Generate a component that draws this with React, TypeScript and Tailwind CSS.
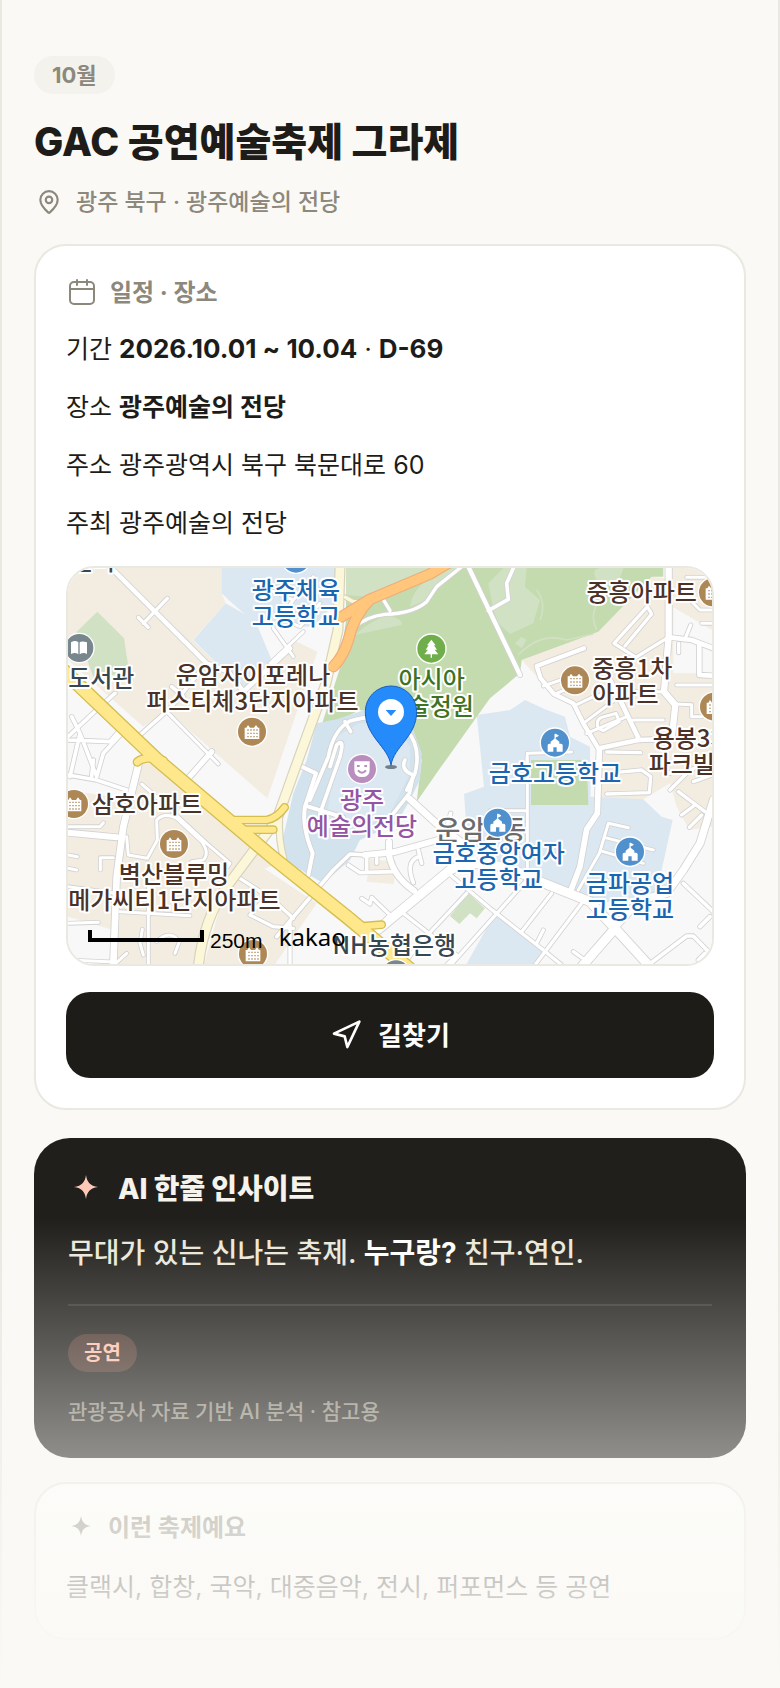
import React from 'react';
import { MapPin, Navigation } from 'lucide-react';

type RoadLine = { d: string; w: number };

// Side streets, drawn as a grey casing below a white fill
const streets: RoadLine[] = [
    { d: 'M150 20 L440 310 L505 335 L550 395 L690 265', w: 14 },
    { d: 'M322 115 L250 190 M235 172 L265 202', w: 10 },
    { d: 'M24 530 L120 440 L165 400 M24 540 L150 545 L180 510 M35 470 L60 520 L30 650 M60 520 L110 650 M190 515 L130 580 L110 650', w: 11 },
    { d: 'M240 525 L330 445 L440 310 M335 380 L370 410', w: 11 },
    { d: 'M320 455 L475 612', w: 9 },
    { d: 'M455 575 L385 655', w: 16 },
    { d: 'M235 615 L190 800 L170 950 L160 1215', w: 20 },
    { d: 'M24 645 L110 660 L200 690 M100 600 L95 650', w: 11 },
    { d: 'M24 818 L170 832', w: 18 },
    { d: 'M24 800 L120 800 L130 788 M24 925 L50 930 M24 885 L52 890 M160 893 L121 893 L121 930 M24 980 L165 1000 M24 1090 L115 1087 M24 1200 L165 1206 M165 1212 L200 1180', w: 9 },
    { d: 'M245 672 L300 720 L440 850 L510 910 L480 950 M200 830 L205 885 L262 895 L292 840 L290 780 Q315 755 350 775 L425 845 Q450 880 430 900 L395 905', w: 9 },
    { d: 'M265 980 L265 1215 M180 1055 L390 1067 M247 1108 L240 1150 L250 1185 M290 1145 Q330 1105 358 1145 L345 1180', w: 9 },
    { d: 'M540 955 L640 1020 L700 1075 M620 1010 L570 1065 L640 1100 L700 1105', w: 10 },
    { d: 'M640 95 L700 120 L760 50 M700 120 L660 175 L720 200 L780 130 M640 205 L700 290 M730 215 L630 310', w: 9 },
    { d: 'M885 200 Q920 170 975 163 Q1060 160 1100 125 L1130 80 L1205 20 M972 122 L990 152', w: 10 },
    { d: 'M1225 20 L1380 345', w: 13 },
    { d: 'M1285 152 L1345 118 L1340 70 L1362 20', w: 11 },
    { d: 'M1040 690 L1065 640 Q1085 560 1040 510 Q980 450 870 483 Q820 510 805 590 L750 720 M855 485 L872 515 M810 620 L830 555 Q855 530 840 590 L780 760', w: 11 },
    { d: 'M1035 600 Q1020 630 1060 645 L1048 700 L1000 760', w: 11 },
    { d: 'M725 620 L768 640 L735 740 Q725 800 758 880 L745 945 M745 740 L850 772', w: 12 },
    { d: 'M1050 718 L1140 800 L1210 850', w: 20 },
    { d: 'M1160 805 L1172 760 M1085 910 L1075 870 M1060 968 Q1035 905 1075 890', w: 11 },
    { d: 'M915 885 L1000 877 L1140 838 M987 845 L987 885 Q1000 950 1062 992', w: 18 },
    { d: 'M650 1130 L820 930 L870 882 L920 885 M865 915 L900 938 L1000 935 M920 890 L920 935 M950 895 L950 910', w: 11 },
    { d: 'M690 1085 L690 1212 M905 1015 L930 1032 L935 1012 L990 1065 L955 1100', w: 10 },
    { d: 'M1030 1060 L1190 1185 L1160 1215 M1220 1000 L1070 1160 L1030 1215', w: 10 },
    { d: 'M1160 935 L1290 1045 L1460 1178 L1505 1215 M1400 960 L1150 1240 M1475 1000 L1385 1115 M1565 1030 L1425 1215 M1450 1110 L1430 1150 M1540 1175 L1575 1200', w: 10 },
    { d: 'M1870 970 L1960 1055 M1765 1215 L1880 1128 L1900 1128 L1960 1190 M1920 1100 L1950 1070 M1915 1200 L1935 1180', w: 11 },
    { d: 'M955 1108 L1170 930 Q1270 880 1440 965 L1590 1025 L1665 1105 L1565 1220 M1665 1105 L1770 1220', w: 27 },
    { d: 'M1665 1100 L1740 1020 L1820 1000 L1870 930 L1920 850 L1960 720', w: 22 },
    { d: 'M1618 570 L1612 760 L1580 808 L1560 920 L1535 985', w: 17 },
    { d: 'M1402 590 L1402 950 M1290 752 L1402 752 M1400 610 L1402 580 L1535 576', w: 9 },
    { d: 'M1705 803 L1645 790 L1618 880 L1555 990 M1632 832 L1780 870 M1620 872 L1750 910', w: 9 },
    { d: 'M1572 265 L1430 318 L1442 355 L1482 402 L1540 430 L1570 490 L1615 565', w: 13 },
    { d: 'M1450 378 L1560 340 M1490 400 L1560 370 M1542 438 L1600 410 L1680 392 M1570 490 L1690 400', w: 9 },
    { d: 'M1618 565 L1735 540 L1880 535 M1738 540 L1690 440 L1645 350', w: 14 },
    { d: 'M1826 20 L1826 230 L1812 395 L1846 435 L1835 535', w: 19 },
    { d: 'M1830 232 L1895 240 L1960 265 M1918 252 L1918 345 L1960 347', w: 14 },
    { d: 'M1892 195 L1878 230 M1856 250 L1856 278 M1820 235 L1760 272 L1728 292 L1662 250 L1762 140 L1775 162 L1695 258', w: 10 },
    { d: 'M1880 52 L1960 52 M1870 100 L1920 150 L1960 150 M1925 190 L1960 190 M1850 375 L1960 375 M1845 432 L1895 434 L1895 470 L1925 470', w: 9 },
    { d: 'M1720 480 L1810 480 M1715 395 L1810 395 M1615 505 Q1605 480 1625 472 L1668 460 L1678 485 L1630 512 Z M1580 520 L1700 470', w: 9 },
    { d: 'M1640 576 L1742 578 M1640 640 L1745 630 M1640 702 L1768 698 L1772 650 L1745 630', w: 10 },
    { d: 'M1830 690 L1890 630 L1960 600 M1800 620 L1830 640 M1855 695 L1935 755 M1905 735 L1865 765 M1925 765 L1888 802 M1900 665 L1956 645', w: 10 },
];

const paleRoads: RoadLine[] = [
    { d: 'M840 20 L834 210 L798 370 L700 640 L650 780 L500 980 Q430 1080 415 1220', w: 26 },
    { d: 'M658 770 Q655 840 672 900', w: 16 },
    { d: 'M856 112 L880 125 L925 125', w: 10 },
];

const highways: RoadLine[] = [
    { d: 'M232 606 Q255 585 310 602', w: 20 },
    { d: 'M520 780 L620 780 Q650 775 674 742', w: 18 },
    { d: 'M550 809 L640 809', w: 18 },
    { d: 'M965 1094 L890 1100', w: 18 },
    { d: 'M0 322 L290 598 L640 894 L860 1070 L1055 1232', w: 36 },
];

const trunkRoads: RoadLine[] = [
    { d: 'M1180 0 L1110 42 L930 118 L845 170', w: 28 },
    { d: 'M930 118 Q880 170 865 240 Q850 290 820 320', w: 28 },
];

const Roads: React.FC<{ lines: RoadLine[]; fill: string; casing: string; edge: number }> = ({ lines, fill, casing, edge }) => (
    <g fill="none" strokeLinecap="round" strokeLinejoin="round">
        {lines.map(line => <path key={`c${line.d}`} d={line.d} stroke={casing} strokeWidth={line.w + edge} />)}
        {lines.map(line => <path key={`f${line.d}`} d={line.d} stroke={fill} strokeWidth={line.w} />)}
    </g>
);

type PoiKind = 'apartment' | 'school' | 'tree' | 'book' | 'mask' | 'bank';

const poiColors: Record<PoiKind, string> = {
    apartment: '#ad8755',
    school: '#5091cd',
    tree: '#6fae4b',
    book: '#78868e',
    mask: '#b98dbd',
    bank: '#78868e',
};

const pois: { kind: PoiKind; x: number; y: number }[] = [
    { kind: 'book', x: 58, y: 264 },
    { kind: 'apartment', x: 576, y: 515 },
    { kind: 'apartment', x: 1959, y: 97 },
    { kind: 'apartment', x: 1545, y: 361 },
    { kind: 'apartment', x: 1962, y: 440 },
    { kind: 'apartment', x: 42, y: 732 },
    { kind: 'apartment', x: 342, y: 852 },
    { kind: 'apartment', x: 579, y: 1182 },
    { kind: 'school', x: 708, y: -4 },
    { kind: 'school', x: 1485, y: 548 },
    { kind: 'school', x: 1313, y: 788 },
    { kind: 'school', x: 1710, y: 875 },
    { kind: 'tree', x: 1114, y: 266 },
    { kind: 'mask', x: 906, y: 627 },
    { kind: 'bank', x: 1008, y: 1243 },
];

const PoiGlyph: React.FC<{ kind: PoiKind }> = ({ kind }) => {
    switch (kind) {
        case 'apartment':
            return (
                <>
                    <path d="M-22 22 V-12 L-17 -12 L-12 -20 L-6 -12 L-3 -12 L3 -12 L6 -12 L12 -20 L18 -12 L22 -12 V22 Z" fill="#fff" />
                    <path d="M-14 -5 H18 M-14 5 H18 M-14 15 H18" stroke="#ad8755" strokeWidth="4" strokeDasharray="4 5" />
                </>
            );
        case 'school':
            return (
                <>
                    <path d="M-22 27 V8 Q-22 3 -17 3 H-13 V-3 L0 -13 L13 -3 V3 H18 Q23 3 23 8 V27 H5 V14 H-5 V27 Z" fill="#fff" />
                    <path d="M0 -10 V-26 L10 -21 L2 -17" stroke="#fff" strokeWidth="3" fill="#fff" />
                </>
            );
        case 'tree':
            return <path d="M0 -27 L13 -10 H8 L17 3 H10 L21 17 H2 V27 H-2 V17 H-21 L-10 3 H-17 L-8 -10 H-13 Z" fill="#fff" />;
        case 'book':
            return <path d="M-25 -17 Q-12 -25 -3 -17 V19 Q-12 12 -25 18 Z M1 -17 Q8 -22 23 -17 V18 Q12 12 1 19 Z" fill="#fff" />;
        case 'mask':
            return (
                <>
                    <path d="M-23 -23 H23 V2 Q23 24 0 24 Q-23 24 -23 2 Z" fill="#fff" />
                    <path d="M-15 -9 H-7 M7 -9 H15 M-12 4 Q0 18 12 4" stroke="#b98dbd" strokeWidth="6" fill="none" />
                </>
            );
        default:
            return null;
    }
};

type MapLabel = { text: string; x: number; y: number; color: string; anchor?: 'start' | 'middle'; size?: number };

const BROWN = '#4b3227';
const BLUE = '#1b66b1';
const SLATE = '#37474f';

const labels: MapLabel[] = [
    { text: '센터', x: 98, y: 31, color: SLATE },
    { text: '광주체육', x: 708, y: 116, color: BLUE },
    { text: '고등학교', x: 708, y: 194, color: BLUE },
    { text: '중흥아파트', x: 1745, y: 122, color: BROWN },
    { text: '도서관', x: 124, y: 382, color: SLATE },
    { text: '운암자이포레나', x: 579, y: 371, color: BROWN },
    { text: '퍼스티체3단지아파트', x: 577, y: 451, color: BROWN },
    { text: '아시아', x: 1115, y: 385, color: '#3e7324' },
    { text: '예술정원', x: 1109, y: 465, color: '#3e7324' },
    { text: '중흥1차', x: 1597, y: 350, color: BROWN, anchor: 'start' },
    { text: '아파트', x: 1597, y: 428, color: BROWN, anchor: 'start' },
    { text: '용봉3차', x: 1778, y: 561, color: BROWN, anchor: 'start' },
    { text: '파크빌', x: 1766, y: 640, color: BROWN, anchor: 'start' },
    { text: '금호고등학교', x: 1485, y: 665, color: BLUE },
    { text: '삼호아파트', x: 95, y: 760, color: BROWN, anchor: 'start' },
    { text: '벽산블루밍', x: 342, y: 968, color: BROWN },
    { text: '메가씨티1단지아파트', x: 343, y: 1048, color: BROWN },
    { text: '광주', x: 906, y: 747, color: '#9456a4' },
    { text: '예술의전당', x: 906, y: 825, color: '#9456a4' },
    { text: '금호중앙여자', x: 1316, y: 906, color: BLUE },
    { text: '고등학교', x: 1316, y: 984, color: BLUE },
    { text: '금파공업', x: 1710, y: 995, color: BLUE },
    { text: '고등학교', x: 1710, y: 1073, color: BLUE },
    { text: 'NH농협은행', x: 1003, y: 1181, color: SLATE },
];

const Label: React.FC<{ label: MapLabel }> = ({ label }) => (
    <text
        x={label.x}
        y={label.y}
        fill={label.color}
        fontSize={label.size ?? 72}
        textAnchor={label.anchor ?? 'middle'}
        stroke="#fff"
        strokeWidth="12"
        strokeLinejoin="round"
        paintOrder="stroke"
    >
        {label.text}
    </text>
);

const VenueMap: React.FC = () => (
    <svg
        viewBox="24 24 1932 1188"
        preserveAspectRatio="xMidYMid slice"
        role="img"
        aria-label="광주예술의 전당 지도"
        className="block h-full w-full font-['Noto_Sans_CJK_KR',sans-serif] font-medium"
    >
        <rect x="0" y="0" width="2000" height="1260" fill="#f8f8f8" />

        {/* housing blocks */}
        <g fill="#f3ece1">
            <path d="M24 24 H485 V100 L497 130 L398 240 L550 390 L700 240 L772 275 L622 715 L325 455 L250 500 L165 425 L24 300 Z" />
            <path d="M240 610 H300 L660 905 L500 980 L400 1220 H165 L190 800 Z" />
            <path d="M24 690 L185 715 L160 1110 L24 1070 Z" />
            <path d="M560 890 L770 1030 L640 1220 H430 L480 1040 Z" />
            <path d="M930 897 L1008 905 L1002 972 L920 965 Z" />
            <path d="M1385 300 L1615 215 L1775 50 L1815 55 V24 H1956 V800 L1888 810 L1850 740 L1750 718 L1610 722 L1615 570 L1540 440 L1440 360 Z" />
        </g>
        <g fill="#f8f8f8">
            <path d="M1840 142 L1956 210 V340 H1840 Z" />
            <path d="M1750 718 L1830 670 L1850 740 L1870 800 L1838 780 Z" />
        </g>

        {/* school grounds */}
        <g fill="#dce8f1">
            <path d="M485 24 H826 V130 L760 200 L640 200 L580 185 L500 115 L485 100 Z" />
            <path d="M497 130 L585 180 L635 300 L550 390 L400 240 Z" />
            <path d="M1250 465 L1350 450 L1395 420 L1455 448 L1515 470 L1530 530 L1590 560 L1592 710 L1750 718 L1805 770 L1838 780 L1805 930 L1840 980 L1740 1020 L1580 1030 L1440 960 L1330 925 L1222 840 L1212 702 L1272 680 Z" />
            <path d="M1305 1060 L1455 1178 L1420 1220 H1215 Z" />
        </g>

        {/* parks */}
        <path d="M112 155 L192 235 L208 340 L100 350 L50 215 Z" fill="#d0e1c4" />
        <path d="M858 24 H1810 V50 L1775 50 L1615 215 L1385 300 L1380 340 L1290 415 L1140 625 L1070 725 L1085 600 L1040 480 L900 450 L830 485 L785 495 L838 330 L858 180 Z" fill="#c4daaf" />
        <g fill="#d0e1c4">
            <path d="M858 24 H1120 L935 112 L858 105 Z" />
            <path d="M885 225 Q920 190 980 165 Q1030 175 1025 195 L930 215 Z" />
            <path d="M1050 140 Q1060 60 1180 24 H1200 L1100 120 Z" />
            <path d="M1285 70 L1330 24 H1400 L1395 80 L1440 120 L1420 190 L1350 222 L1315 190 L1300 150 Z" />
            <path d="M1610 60 Q1590 24 1625 24 H1690 Q1680 75 1635 78 Z" />
            <path d="M1385 230 L1400 240 L1385 265 L1365 250 Z" />
        </g>
        <path d="M1375 285 Q1440 215 1520 240 L1600 222 M1430 90 Q1460 130 1440 180 M1610 210 Q1580 150 1640 100 L1700 60" stroke="#d0e1c4" strokeWidth="5" fill="none" />
        <path d="M1413 600 H1580 L1585 735 H1413 Z" fill="#c4daaf" />
        <path d="M1225 1000 L1275 1045 L1250 1075 L1230 1060 L1198 1092 L1170 1068 Z" fill="#d0e1c4" />

        {/* arts center grounds */}
        <path d="M770 490 L830 478 L920 448 L1000 460 L1060 510 L1085 580 L1080 660 L1050 720 L1010 790 L900 840 L870 900 L790 970 L680 905 L665 850 L700 700 L740 600 Z" fill="#d2e3ee" />
        <path d="M830 530 L900 490 L1000 490 L1050 560 L1050 640 L990 760 L890 820 L800 790 Z" fill="#dce8f1" />

        <Roads lines={streets} fill="#ffffff" casing="#d2d2d2" edge={5} />
        <Roads lines={paleRoads} fill="#fcf7d8" casing="#d6d2bc" edge={7} />
        <Roads lines={highways} fill="#ffe88c" casing="#d5be50" edge={8} />
        <Roads lines={trunkRoads} fill="#ffc67c" casing="#f0ac7c" edge={7} />

        <Label label={{ text: '운암2동', x: 1262, y: 841, color: '#6b6b6b', size: 82 }} />
        {pois.map(poi => (
            <g key={`${poi.x}-${poi.y}`} transform={`translate(${poi.x} ${poi.y})`}>
                <circle r="46" fill="#fff" />
                <circle r="42" fill={poiColors[poi.kind]} />
                <PoiGlyph kind={poi.kind} />
            </g>
        ))}
        {labels.map(label => <Label key={`${label.text}-${label.x}-${label.y}`} label={label} />)}

        {/* scale bar and provider */}
        <path d="M90 1110 V1140 H426 V1110" fill="none" stroke="#000" strokeWidth="12" />
        <text x="450" y="1163" fontSize="63" fill="#000" className="font-['Liberation_Sans',sans-serif] font-normal">250m</text>
        <text x="656" y="1157" fontSize="72" fill="#000" className="font-['Noto_Sans',sans-serif] font-normal">kakao</text>

        {/* venue marker */}
        <ellipse cx="993" cy="621" rx="18" ry="6" fill="#3b4650" opacity="0.65" />
        <path d="M993 616 C985 560 916 530 916 455 A77 77 0 0 1 1070 455 C1070 530 1001 560 993 616 Z" fill="#258bfa" stroke="#1a5fc0" strokeWidth="3" />
        <circle cx="993" cy="456" r="39" fill="#fff" />
        <path d="M977 450 H1009 L993 468 Z" fill="#258bfa" />
    </svg>
);

const CalendarIcon: React.FC<{ className?: string }> = ({ className }) => (
    <svg viewBox="0 0 32 32" fill="none" stroke="currentColor" strokeWidth="2" strokeLinecap="round" className={className} aria-hidden="true">
        <rect x="4" y="5" width="24" height="22" rx="4" />
        <path d="M4 12 H28 M11 3 V8 M21 3 V8" />
    </svg>
);

const SparkIcon: React.FC<{ className?: string }> = ({ className }) => (
    <svg viewBox="0 0 24 24" fill="currentColor" className={className} aria-hidden="true">
        <path d="M12 0 C13 7 16 11 24 12 C16 13 13 17 12 24 C11 17 8 13 0 12 C8 11 11 7 12 0 Z" />
    </svg>
);

const App: React.FC = () => {
    return (
        <main className="relative min-h-screen border-x-2 border-[#e9e8e1] bg-[#faf9f5] px-8 pt-14 pb-11 font-['Inter','Noto_Sans_CJK_KR',sans-serif] text-[#1e1c18]">
            <header>
                <span className="flex h-[38px] w-fit items-center rounded-full bg-[#f3f2ed] px-[18px] text-[22px] font-bold text-[#8c887c]">10월</span>
                <h1 className="mt-5 text-[39px] leading-[56px] font-extrabold">GAC 공연예술축제 그라제</h1>
                <p className="mt-3.5 flex items-center gap-3 text-[23px] leading-9 font-medium text-[#8c887c]">
                    <span className="flex w-[30px] justify-center">
                        <MapPin className="size-[26px]" strokeWidth={2} />
                    </span>
                    광주 북구 · 광주예술의 전당
                </p>
            </header>

            <section className="mt-6 rounded-[32px] border-2 border-[#e9e8e1] bg-white p-[30px]">
                <h2 className="flex items-center gap-3 text-[24px] leading-[34px] font-bold text-[#8c887c]">
                    <CalendarIcon className="size-8" />
                    일정 · 장소
                </h2>
                <div className="mt-[18px] flex flex-col gap-4 text-[25px] leading-[42px]">
                    <p>기간 <b className="text-[26px]">2026.10.01 ~ 10.04</b> · <b className="text-[26px]">D-69</b></p>
                    <p>장소 <b>광주예술의 전당</b></p>
                    <p>주소 광주광역시 북구 북문대로 60</p>
                    <p>주최 광주예술의 전당</p>
                </div>
                <div className="mt-[22px] h-[400px] overflow-hidden rounded-[28px] border-2 border-[#e9e8e1]">
                    <VenueMap />
                </div>
                <button type="button" className="mt-[26px] flex h-[86px] w-full items-center justify-center gap-4 rounded-3xl bg-[#1e1c18] text-[26px] font-bold text-white">
                    <Navigation className="size-8" strokeWidth={2} />
                    길찾기
                </button>
            </section>

            <section className="mt-7 rounded-[36px] bg-[#201f1b] px-[34px] pt-[34px] pb-[30px]">
                <h2 className="flex items-center gap-3.5 text-[28px] leading-[34px] font-extrabold text-[#f5f3ec]">
                    <span className="flex w-9 justify-center pb-1">
                        <SparkIcon className="size-6 text-[#ffc9b8]" />
                    </span>
                    AI 한줄 인사이트
                </h2>
                <p className="mt-6 text-[28px] leading-[46px] font-medium text-[#ebe7db]">
                    무대가 있는 신나는 축제. <b className="text-white">누구랑?</b> 친구·연인.
                </p>
                <hr className="mt-7 border-t-2 border-[#373632]" />
                <span className="mt-7 flex h-[38px] w-fit items-center rounded-full bg-[#4a342d] px-4 text-[20px] font-bold text-[#ffbfa9]">공연</span>
                <p className="mt-6 text-[21px] leading-8 font-medium text-[#8c887c]">관광공사 자료 기반 AI 분석 · 참고용</p>
            </section>

            <section className="mt-6 rounded-[32px] border-2 border-[#e9e8e1] bg-white px-[30px] pt-[26px] pb-[30px]">
                <h2 className="flex items-center gap-3 text-[24px] leading-9 font-bold text-[#8c887c]">
                    <span className="flex w-[30px] justify-center pb-1">
                        <SparkIcon className="size-5" />
                    </span>
                    이런 축제예요
                </h2>
                <p className="mt-5 text-[25px] leading-[42px]">클랙시, 합창, 국악, 대중음악, 전시, 퍼포먼스 등 공연</p>
            </section>

            {/* fades the cards out towards the bottom of the page */}
            <div className="pointer-events-none absolute -inset-x-0.5 bottom-0 h-[470px] bg-linear-to-b from-[#faf9f5]/0 to-[#faf9f5]" />
        </main>
    );
};

export default App;
